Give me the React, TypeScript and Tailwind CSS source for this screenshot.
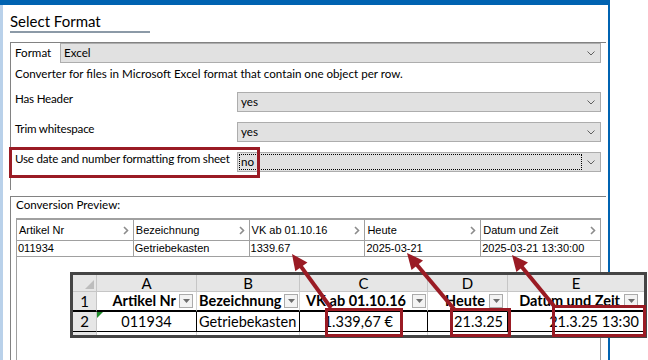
const RED = "#9a1b24";

const previewCols = [
  { w: "w-[117px]", head: "Artikel Nr", val: "011934" },
  { w: "w-[116px]", head: "Bezeichnung", val: "Getriebekasten" },
  { w: "w-[116px]", head: "VK ab 01.10.16", val: "1339.67" },
  { w: "w-[116px]", head: "Heute", val: "2025-03-21" },
  { w: "w-[119px]", head: "Datum und Zeit", val: "2025-03-21 13:30:00" },
];

const arrows = [
  [331, 308, 292, 254],
  [454, 309, 407, 253],
  [554, 306, 512, 255],
];

function Chevron() {
  return (
    <svg width="8" height="5" viewBox="0 0 8 5" className="shrink-0">
      <path d="M0.5 0.5 L4 4 L7.5 0.5" fill="none" stroke="#5f5f5f" strokeWidth="1" />
    </svg>
  );
}

function Combo({ value, focused }: { value: string; focused?: boolean }) {
  return (
    <div className="flex-1 h-[20px] bg-[#e1e1e1] border border-[#adadad] flex items-center pr-[5px]">
      <div
        className={`flex-1 h-[16px] ml-[1px] mr-[5px] flex items-center pl-[1px] leading-[14px] ${
          focused ? "border border-dotted border-black" : "border border-transparent"
        }`}
      >
        {value}
      </div>
      <Chevron />
    </div>
  );
}

function FormRow({ label, value, focused }: { label: string; value: string; focused?: boolean }) {
  return (
    <div className="flex h-[20px] mt-[10px]">
      <div className="w-[222px] leading-[14px] whitespace-nowrap tracking-[-0.2px]">{label}</div>
      <Combo value={value} focused={focused} />
    </div>
  );
}

function HeadChevron() {
  return (
    <svg width="6" height="9" viewBox="0 0 6 9" className="shrink-0">
      <path d="M1 1 L4.5 4.5 L1 8" fill="none" stroke="#8c8c8c" strokeWidth="1.6" />
    </svg>
  );
}

function FilterBtn() {
  return (
    <span className="w-[14px] h-[14px] shrink-0 border border-[#ababab] bg-[#f3f3f3] flex items-center justify-center">
      <svg width="7" height="4" viewBox="0 0 7 4">
        <path d="M0 0H7L3.5 4Z" fill="#6d6d6d" />
      </svg>
    </span>
  );
}

function Arrow({ x1, y1, x2, y2 }: { x1: number; y1: number; x2: number; y2: number }) {
  const dx = x2 - x1;
  const dy = y2 - y1;
  const len = Math.hypot(dx, dy);
  const ux = dx / len;
  const uy = dy / len;
  const bx = x2 - ux * 16;
  const by = y2 - uy * 16;
  const px = -uy * 7.5;
  const py = ux * 7.5;
  return (
    <g>
      <line x1={x1} y1={y1} x2={bx + ux * 2} y2={by + uy * 2} stroke={RED} strokeWidth="4" />
      <polygon points={`${x2},${y2} ${bx + px},${by + py} ${bx - px},${by - py}`} fill={RED} />
    </g>
  );
}

function ExcelSheet() {
  const hdr = "bg-[#e6e6e6] border-r border-[#c6c6c6] flex items-center justify-center";
  return (
    <div className="absolute left-[70px] top-[272px] w-[577px] h-[66px] border-[3px] border-[#454545] bg-white font-['Lato',sans-serif] text-[14.5px] text-black">
      <div className="grid grid-cols-[24px_100px_103px_128px_80px_136px] grid-rows-[17px_20px_20px_3px]">
        {/* column letters */}
        <div className={`${hdr} relative border-b`}>
          <span className="absolute right-[2px] bottom-[2px] w-0 h-0 border-b-[9px] border-l-[9px] border-b-[#bdbdbd] border-l-transparent" />
        </div>
        <div className={`${hdr} border-b text-[15px] leading-[16px]`}>A</div>
        <div className={`${hdr} border-b text-[15px] leading-[16px]`}>B</div>
        <div className={`${hdr} border-b text-[15px] leading-[16px]`}>C</div>
        <div className={`${hdr} border-b text-[15px] leading-[16px]`}>D</div>
        <div className={`${hdr} border-b border-r-0 text-[15px] leading-[16px]`}>E</div>

        {/* row 1 */}
        <div className="bg-[#e6e6e6] border-r border-[#c6c6c6] border-b-2 border-b-black flex items-center justify-center text-[15px]">1</div>
        <div className="border-r border-[#d4d4d4] border-b-2 border-b-black flex items-center justify-end gap-[3px] pr-[3px] font-bold">
          Artikel Nr <FilterBtn />
        </div>
        <div className="border-r border-[#d4d4d4] border-b-2 border-b-black flex items-center justify-between pl-[2px] pr-[1px] font-bold">
          Bezeichnung <FilterBtn />
        </div>
        <div className="border-r border-[#d4d4d4] border-b-2 border-b-black flex items-center justify-end gap-[6px] pr-[1px] font-bold whitespace-nowrap">
          VK ab 01.10.16 <FilterBtn />
        </div>
        <div className="border-r border-[#d4d4d4] border-b-2 border-b-black flex items-center justify-end gap-[4px] pr-[4px] font-bold">
          Heute <FilterBtn />
        </div>
        <div className="border-b-2 border-b-black flex items-center justify-end gap-[4px] pr-[6px] font-bold whitespace-nowrap">
          Datum und Zeit <FilterBtn />
        </div>

        {/* row 2 */}
        <div className="bg-[#e6e6e6] border-r border-[#c6c6c6] border-b border-b-black flex items-center justify-center text-[15px]">2</div>
        <div className="relative border-r border-black border-b flex items-center justify-center">
          <span className="absolute left-0 top-0 w-0 h-0 border-t-[6px] border-r-[6px] border-t-[#1f8a2a] border-r-transparent" />
          011934
        </div>
        <div className="border-r border-black border-b flex items-center pl-[2px]">Getriebekasten</div>
        <div className="border-r border-black border-b flex items-center justify-end pr-[34px] whitespace-nowrap">1.339,67 €</div>
        <div className="border-r border-black border-b flex items-center justify-end pr-[4px]">21.3.25</div>
        <div className="border-b border-black flex items-center justify-end pr-[5px] whitespace-nowrap">21.3.25 13:30</div>

        {/* partial row 3 */}
        <div className="bg-[#e6e6e6] border-r border-[#c6c6c6]" />
        <div className="border-r border-[#d4d4d4]" />
        <div className="border-r border-[#d4d4d4]" />
        <div className="border-r border-[#d4d4d4]" />
        <div className="border-r border-[#d4d4d4]" />
        <div />
      </div>
    </div>
  );
}

export default function App() {
  return (
    <div className="relative w-[648px] h-[360px] overflow-hidden bg-white text-black font-['Lato',sans-serif] text-[11.6px]">
      <div className="flex h-full w-[610px] border-t-[5px] border-r-[2px] border-[#0063b1]">
        <div className="w-[3px] h-full bg-[#b9d1ea]" />
        <div className="flex-1 flex flex-col pl-[7px]">
          {/* Title */}
          <div className="mt-[6px] text-[15px] leading-[20px]">Select Format</div>
          <div className="w-[140px] h-[2px] bg-[#8c9aa7]" />

          {/* Format group */}
          <div className="mt-[9px] w-[596px] h-[148px] border-t border-l border-[#828282] pl-[4px] pr-[5px]">
            <div className="flex h-[20px]">
              <div className="w-[45px] flex items-center leading-[14px]">Format</div>
              <Combo value="Excel" />
            </div>
            <div className="mt-[3px] leading-[16px] whitespace-nowrap">
              Converter for files in Microsoft Excel format that contain one object per row.
            </div>
            <FormRow label="Has Header" value="yes" />
            <FormRow label="Trim whitespace" value="yes" />
            <FormRow label="Use date and number formatting from sheet" value="no" focused />
          </div>

          {/* Conversion preview group */}
          <div className="mt-[6px] w-[596px] flex-1 flex flex-col border-t border-l border-[#828282] pl-[5px] pr-[5px]">
            <div className="mt-[1px] leading-[14px]">Conversion Preview:</div>
            <div className="mt-[6px] w-[585px] flex-1 flex flex-col border-t-2 border-l border-r border-[#a0a0a0] font-['Liberation_Sans',sans-serif] text-[11px]">
              <div className="flex">
                {previewCols.map((c) => (
                  <div
                    key={c.head}
                    className={`${c.w} h-[21px] border-b border-r last:border-r-0 border-[#a0a0a0] flex items-center justify-between pl-[2px] pr-[4px] whitespace-nowrap`}
                  >
                    {c.head}
                    <HeadChevron />
                  </div>
                ))}
              </div>
              <div className="flex">
                {previewCols.map((c) => (
                  <div
                    key={c.head}
                    className={`${c.w} h-[16px] border-b border-r last:border-r-0 border-[#a0a0a0] flex items-center pl-[1px] whitespace-nowrap`}
                  >
                    {c.val}
                  </div>
                ))}
              </div>
            </div>
          </div>
        </div>
      </div>

      {/* Excel sheet screenshot overlay */}
      <ExcelSheet />

      {/* Annotations */}
      <div className="absolute left-[9px] top-[147px] w-[251px] h-[31px] border-[3px] border-[#9a1b24]" />
      <div className="absolute left-[325px] top-[308px] w-[78px] h-[29px] border-[3px] border-[#9a1b24]" />
      <div className="absolute left-[450px] top-[308px] w-[61px] h-[29px] border-[3px] border-[#9a1b24]" />
      <div className="absolute left-[552px] top-[305px] w-[94px] h-[32px] border-[3px] border-[#9a1b24]" />
      <svg className="absolute left-0 top-0 pointer-events-none" width="648" height="360">
        {arrows.map(([x1, y1, x2, y2], i) => (
          <Arrow key={i} x1={x1} y1={y1} x2={x2} y2={y2} />
        ))}
      </svg>
    </div>
  );
}
